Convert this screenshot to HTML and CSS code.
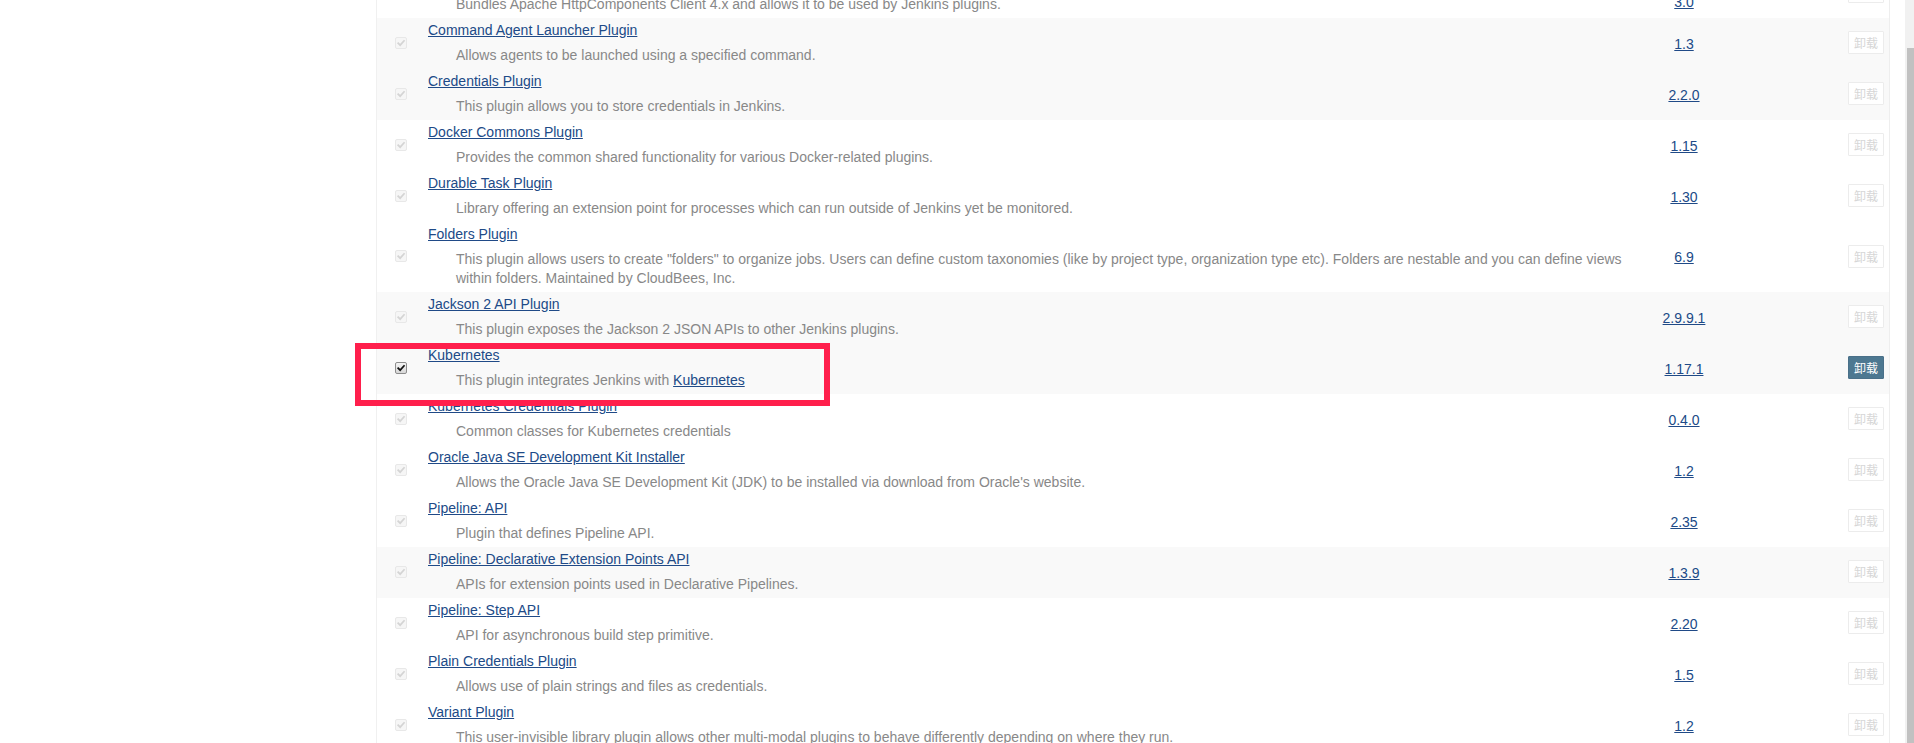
FILE: index.html
```html
<!DOCTYPE html>
<html lang="zh">
<head>
<meta charset="utf-8">
<title>Installed plugins</title>
<link rel="stylesheet" href="styles.css">
</head>
<body>
<div class="plugins">
  <div class="row">
    <div class="c-check"><span class="cb dis"><svg viewBox="0 0 12 12"><path d="M2.6 6.2 L5 8.6 L9.6 3.4"/></svg></span></div>
    <div class="c-name"><a class="name" href="#">Apache HttpComponents Client 4.x API Plugin</a><div class="excerpt">Bundles Apache HttpComponents Client 4.x and allows it to be used by Jenkins plugins.</div></div>
    <div class="c-ver first"><a href="#">3.0</a></div>
    <div class="c-btn"><button class="btn dis">卸载</button></div>
  </div>
  <div class="row alt">
    <div class="c-check"><span class="cb dis"><svg viewBox="0 0 12 12"><path d="M2.6 6.2 L5 8.6 L9.6 3.4"/></svg></span></div>
    <div class="c-name"><a class="name" href="#">Command Agent Launcher Plugin</a><div class="excerpt">Allows agents to be launched using a specified command.</div></div>
    <div class="c-ver"><a href="#">1.3</a></div>
    <div class="c-btn"><button class="btn dis">卸载</button></div>
  </div>
  <div class="row alt">
    <div class="c-check"><span class="cb dis"><svg viewBox="0 0 12 12"><path d="M2.6 6.2 L5 8.6 L9.6 3.4"/></svg></span></div>
    <div class="c-name"><a class="name" href="#">Credentials Plugin</a><div class="excerpt">This plugin allows you to store credentials in Jenkins.</div></div>
    <div class="c-ver"><a href="#">2.2.0</a></div>
    <div class="c-btn"><button class="btn dis">卸载</button></div>
  </div>
  <div class="row">
    <div class="c-check"><span class="cb dis"><svg viewBox="0 0 12 12"><path d="M2.6 6.2 L5 8.6 L9.6 3.4"/></svg></span></div>
    <div class="c-name"><a class="name" href="#">Docker Commons Plugin</a><div class="excerpt">Provides the common shared functionality for various Docker-related plugins.</div></div>
    <div class="c-ver"><a href="#">1.15</a></div>
    <div class="c-btn"><button class="btn dis">卸载</button></div>
  </div>
  <div class="row">
    <div class="c-check"><span class="cb dis"><svg viewBox="0 0 12 12"><path d="M2.6 6.2 L5 8.6 L9.6 3.4"/></svg></span></div>
    <div class="c-name"><a class="name" href="#">Durable Task Plugin</a><div class="excerpt">Library offering an extension point for processes which can run outside of Jenkins yet be monitored.</div></div>
    <div class="c-ver"><a href="#">1.30</a></div>
    <div class="c-btn"><button class="btn dis">卸载</button></div>
  </div>
  <div class="row">
    <div class="c-check"><span class="cb dis"><svg viewBox="0 0 12 12"><path d="M2.6 6.2 L5 8.6 L9.6 3.4"/></svg></span></div>
    <div class="c-name"><a class="name" href="#">Folders Plugin</a><div class="excerpt">This plugin allows users to create "folders" to organize jobs. Users can define custom taxonomies (like by project type, organization type etc). Folders are nestable and you can define views within folders. Maintained by CloudBees, Inc.</div></div>
    <div class="c-ver"><a href="#">6.9</a></div>
    <div class="c-btn"><button class="btn dis">卸载</button></div>
  </div>
  <div class="row alt">
    <div class="c-check"><span class="cb dis"><svg viewBox="0 0 12 12"><path d="M2.6 6.2 L5 8.6 L9.6 3.4"/></svg></span></div>
    <div class="c-name"><a class="name" href="#">Jackson 2 API Plugin</a><div class="excerpt">This plugin exposes the Jackson 2 JSON APIs to other Jenkins plugins.</div></div>
    <div class="c-ver"><a href="#">2.9.9.1</a></div>
    <div class="c-btn"><button class="btn dis">卸载</button></div>
  </div>
  <div class="row alt">
    <div class="c-check"><span class="cb on"><svg viewBox="0 0 12 12"><path d="M2.6 6.2 L5 8.6 L9.6 3.4"/></svg></span></div>
    <div class="c-name"><a class="name" href="#">Kubernetes</a><div class="excerpt">This plugin integrates Jenkins with <a href="#">Kubernetes</a></div></div>
    <div class="c-ver"><a href="#">1.17.1</a></div>
    <div class="c-btn"><button class="btn">卸载</button></div>
  </div>
  <div class="row">
    <div class="c-check"><span class="cb dis"><svg viewBox="0 0 12 12"><path d="M2.6 6.2 L5 8.6 L9.6 3.4"/></svg></span></div>
    <div class="c-name"><a class="name" href="#">Kubernetes Credentials Plugin</a><div class="excerpt">Common classes for Kubernetes credentials</div></div>
    <div class="c-ver"><a href="#">0.4.0</a></div>
    <div class="c-btn"><button class="btn dis">卸载</button></div>
  </div>
  <div class="row">
    <div class="c-check"><span class="cb dis"><svg viewBox="0 0 12 12"><path d="M2.6 6.2 L5 8.6 L9.6 3.4"/></svg></span></div>
    <div class="c-name"><a class="name" href="#">Oracle Java SE Development Kit Installer</a><div class="excerpt">Allows the Oracle Java SE Development Kit (JDK) to be installed via download from Oracle's website.</div></div>
    <div class="c-ver"><a href="#">1.2</a></div>
    <div class="c-btn"><button class="btn dis">卸载</button></div>
  </div>
  <div class="row">
    <div class="c-check"><span class="cb dis"><svg viewBox="0 0 12 12"><path d="M2.6 6.2 L5 8.6 L9.6 3.4"/></svg></span></div>
    <div class="c-name"><a class="name" href="#">Pipeline: API</a><div class="excerpt">Plugin that defines Pipeline API.</div></div>
    <div class="c-ver"><a href="#">2.35</a></div>
    <div class="c-btn"><button class="btn dis">卸载</button></div>
  </div>
  <div class="row alt">
    <div class="c-check"><span class="cb dis"><svg viewBox="0 0 12 12"><path d="M2.6 6.2 L5 8.6 L9.6 3.4"/></svg></span></div>
    <div class="c-name"><a class="name" href="#">Pipeline: Declarative Extension Points API</a><div class="excerpt">APIs for extension points used in Declarative Pipelines.</div></div>
    <div class="c-ver"><a href="#">1.3.9</a></div>
    <div class="c-btn"><button class="btn dis">卸载</button></div>
  </div>
  <div class="row">
    <div class="c-check"><span class="cb dis"><svg viewBox="0 0 12 12"><path d="M2.6 6.2 L5 8.6 L9.6 3.4"/></svg></span></div>
    <div class="c-name"><a class="name" href="#">Pipeline: Step API</a><div class="excerpt">API for asynchronous build step primitive.</div></div>
    <div class="c-ver"><a href="#">2.20</a></div>
    <div class="c-btn"><button class="btn dis">卸载</button></div>
  </div>
  <div class="row">
    <div class="c-check"><span class="cb dis"><svg viewBox="0 0 12 12"><path d="M2.6 6.2 L5 8.6 L9.6 3.4"/></svg></span></div>
    <div class="c-name"><a class="name" href="#">Plain Credentials Plugin</a><div class="excerpt">Allows use of plain strings and files as credentials.</div></div>
    <div class="c-ver"><a href="#">1.5</a></div>
    <div class="c-btn"><button class="btn dis">卸载</button></div>
  </div>
  <div class="row">
    <div class="c-check"><span class="cb dis"><svg viewBox="0 0 12 12"><path d="M2.6 6.2 L5 8.6 L9.6 3.4"/></svg></span></div>
    <div class="c-name"><a class="name" href="#">Variant Plugin</a><div class="excerpt">This user-invisible library plugin allows other multi-modal plugins to behave differently depending on where they run.</div></div>
    <div class="c-ver"><a href="#">1.2</a></div>
    <div class="c-btn"><button class="btn dis">卸载</button></div>
  </div>
</div>
<div class="highlight"></div>
<div class="scrollbar"><div class="thumb"></div></div>
</body>
</html>
```
FILE: styles.css
```css
html, body {
  margin: 0;
  padding: 0;
  height: 743px;
  overflow: hidden;
  background: #fff;
}
body {
  font-family: "Liberation Sans", Arial, "Noto Sans CJK SC", sans-serif;
  font-size: 14px;
  color: #333;
}
.plugins {
  margin: -33px 0 0 376px;
  width: 1514px;
  box-sizing: border-box;
  border-left: 1px solid #f0f0f0;
  border-right: 1px solid #eeeeee;
}
.row {
  display: grid;
  grid-template-columns: 47px 1210px 100px 155px;
  background: #fff;
}
.row.alt {
  background: #f9f9f9;
}
.c-check {
  display: flex;
  align-items: center;
  justify-content: center;
}
.cb {
  width: 12px;
  height: 12px;
  box-sizing: border-box;
  border-radius: 2px;
  display: block;
  margin-top: -2px;
}
.cb svg {
  display: block;
  width: 10px;
  height: 10px;
  fill: none;
  stroke-width: 2;
  stroke-linecap: square;
}
.cb.dis {
  border: 1px solid #e8e8e8;
  background: #f6f6f6;
}
.cb.dis svg {
  stroke: #d4d4d4;
}
.cb.on {
  border: 1px solid #8d8d8d;
  background: linear-gradient(#f4f4f4, #d8d8d8);
}
.cb.on svg {
  stroke: #111;
}
.c-name {
  padding: 3px 8px 4px 4px;
}
a {
  color: #204a87;
  text-decoration: underline;
}
.name {
  display: block;
  line-height: 18px;
  width: max-content;
}
.excerpt {
  margin-top: 7px;
  padding-left: 28px;
  line-height: 19px;
  color: #888;
}
.c-ver {
  display: flex;
  align-items: center;
  justify-content: center;
  line-height: 18px;
}
.c-ver.first {
  padding-top: 18px;
}
.c-btn {
  display: flex;
  align-items: center;
  justify-content: flex-end;
  padding-right: 5px;
}
.btn {
  height: 23px;
  padding: 0 5px;
  border: 1px solid #4a7089;
  background: #4d7891;
  color: #fff;
  font-family: "Noto Sans CJK SC", sans-serif;
  font-size: 12px;
  line-height: 21px;
  border-radius: 1px;
  margin-top: -2px;
}
.btn.dis {
  background: #fff;
  border-color: #ececec;
  color: #d6d6d6;
}
.highlight {
  position: absolute;
  left: 355px;
  top: 343px;
  width: 475px;
  height: 63px;
  box-sizing: border-box;
  border: 6px solid #ff1f4c;
}
.scrollbar {
  position: fixed;
  top: 0;
  right: 0;
  width: 9px;
  height: 743px;
  background: #f1f1f1;
}
.thumb {
  position: absolute;
  left: 2px;
  right: 0;
  top: 48px;
  bottom: 0;
  background: #c1c1c1;
}
```
